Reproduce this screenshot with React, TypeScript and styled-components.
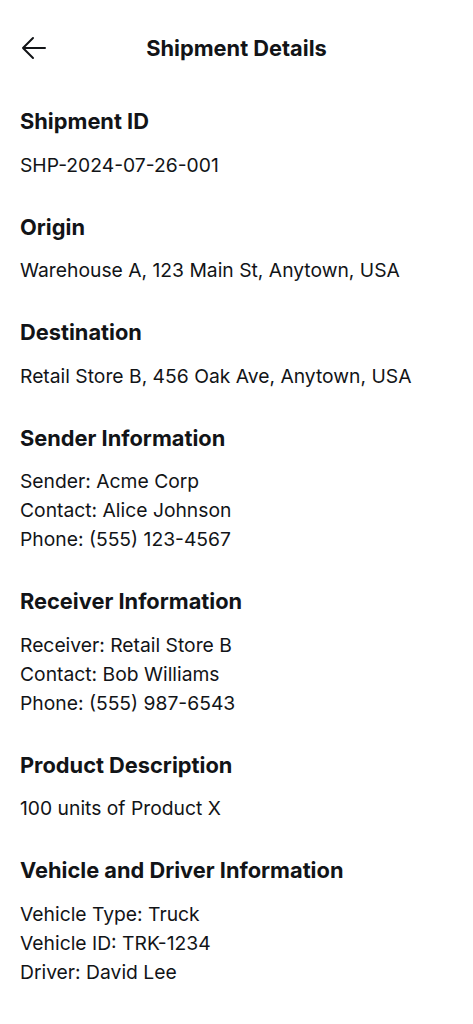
import React, { FC } from 'react';
import styled, { createGlobalStyle } from 'styled-components';

const GlobalStyle = createGlobalStyle`
  body {
    margin: 0;
    background: #ffffff;
    font-family: 'Inter', 'Noto Sans', sans-serif;
    color: #121417;
  }
`;

//Parent Div
const Page = styled.div`
  width: 473px;
  min-height: 1024px;
  background: #ffffff;
`;

//Top bar
const Header = styled.header`
  height: 96px;
  display: grid;
  grid-template-columns: 56px 1fr 56px;
  align-items: center;
`;

const BackButton = styled.button`
  border: none;
  background: none;
  padding: 0 0 0 21px;
  height: 48px;
  display: flex;
  align-items: center;
  cursor: pointer;
  color: #121417;
`;

const Title = styled.h1`
  margin: 0;
  text-align: center;
  font-size: 21.8px;
  font-weight: 700;
  line-height: 28px;
`;

const Content = styled.main`
  padding: 11px 20px 0;
  display: flex;
  flex-direction: column;
  gap: 33px;
`;

const Section = styled.section`
  display: flex;
  flex-direction: column;
  gap: 15.5px;
`;

const Heading = styled.h2`
  margin: 0;
  font-size: 21.8px;
  font-weight: 700;
  line-height: 28px;
`;

const Lines = styled.div`
  display: flex;
  flex-direction: column;
`;

const Line = styled.p`
  margin: 0;
  font-size: 19.3px;
  font-weight: 400;
  line-height: 29px;
  color: #121417;
`;

const sections: { title: string; lines: string[] }[] = [
  { title: 'Shipment ID', lines: ['SHP-2024-07-26-001'] },
  { title: 'Origin', lines: ['Warehouse A, 123 Main St, Anytown, USA'] },
  { title: 'Destination', lines: ['Retail Store B, 456 Oak Ave, Anytown, USA'] },
  {
    title: 'Sender Information',
    lines: ['Sender: Acme Corp', 'Contact: Alice Johnson', 'Phone: (555) 123-4567'],
  },
  {
    title: 'Receiver Information',
    lines: ['Receiver: Retail Store B', 'Contact: Bob Williams', 'Phone: (555) 987-6543'],
  },
  { title: 'Product Description', lines: ['100 units of Product X'] },
  {
    title: 'Vehicle and Driver Information',
    lines: ['Vehicle Type: Truck', 'Vehicle ID: TRK-1234', 'Driver: David Lee'],
  },
];

const App: FC = () => {
  return (
    <>
      <GlobalStyle />
      <Page>
        <Header>
          <BackButton aria-label="Back">
            <svg width="26" height="26" viewBox="0 0 26 26" fill="none">
              <path
                d="M24 13H2M12 3L2 13l10 10"
                stroke="currentColor"
                strokeWidth="2"
                strokeLinecap="round"
                strokeLinejoin="round"
              />
            </svg>
          </BackButton>
          <Title>Shipment Details</Title>
          <div />
        </Header>
        <Content>
          {sections.map((s) => (
            <Section key={s.title}>
              <Heading>{s.title}</Heading>
              <Lines>
                {s.lines.map((l) => (
                  <Line key={l}>{l}</Line>
                ))}
              </Lines>
            </Section>
          ))}
        </Content>
      </Page>
    </>
  );
};

export default App;
